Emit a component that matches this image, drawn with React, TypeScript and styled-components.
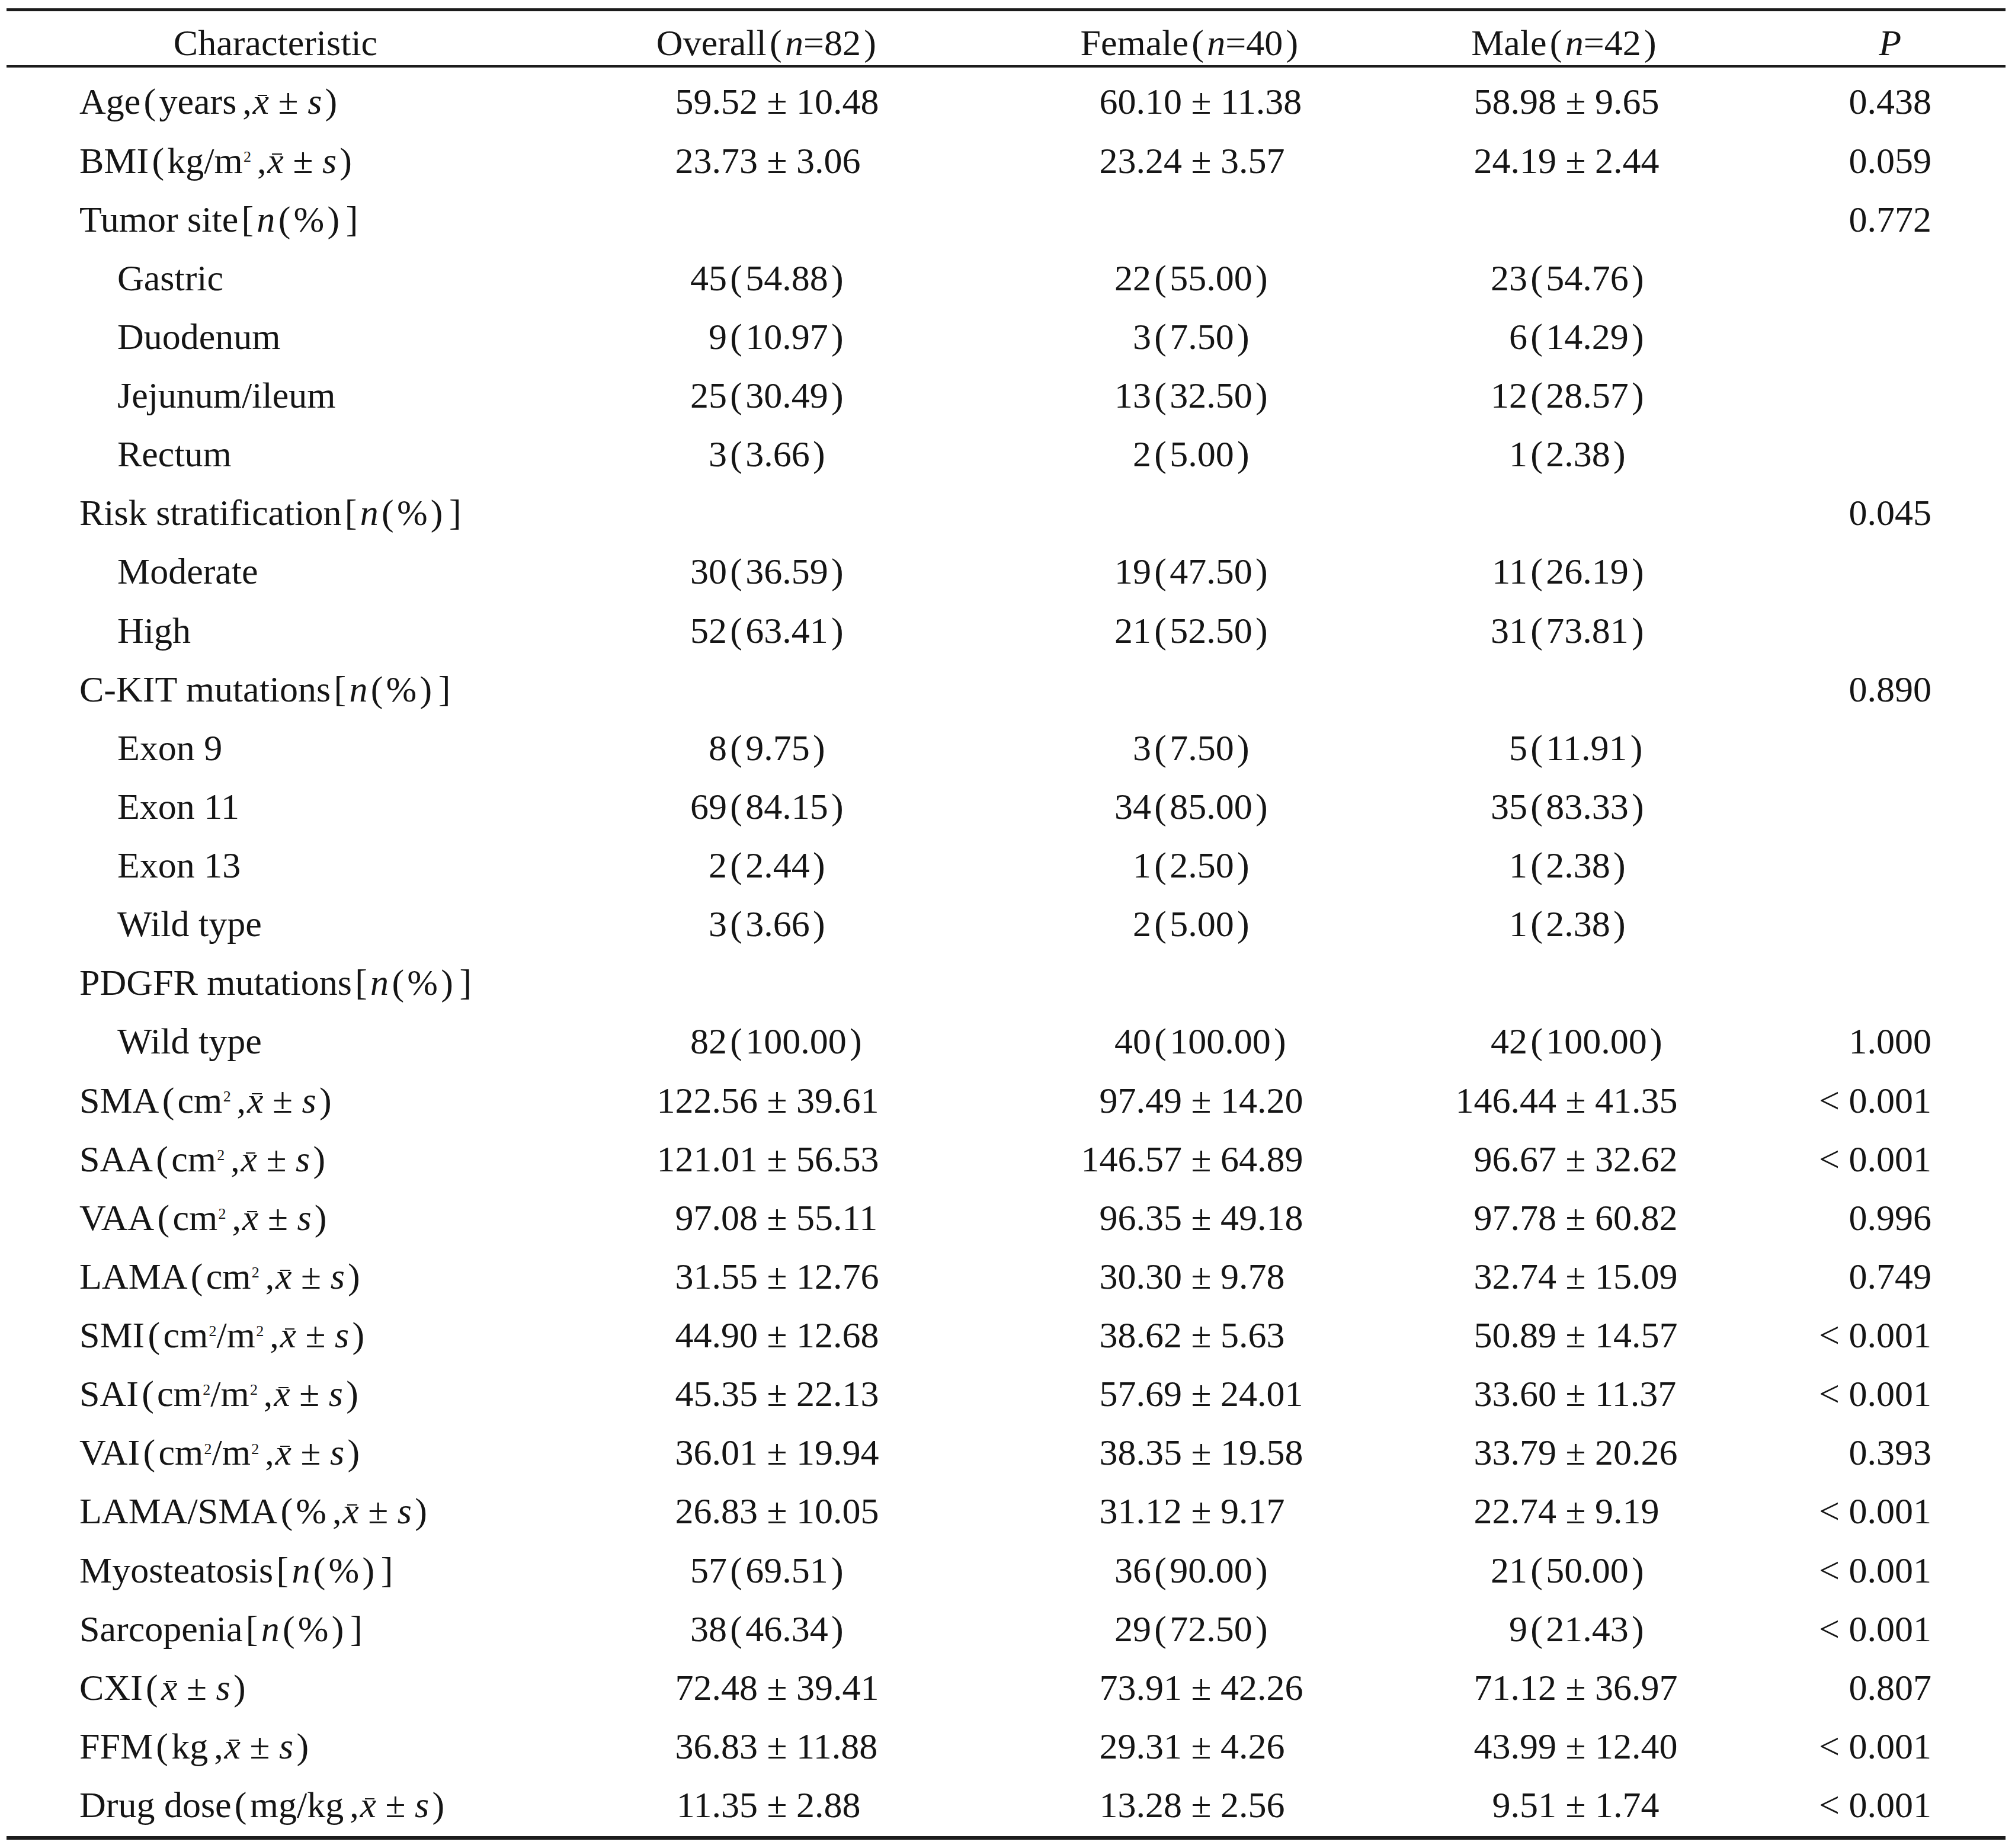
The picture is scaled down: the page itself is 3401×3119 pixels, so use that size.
import React from "react";
import styled, { createGlobalStyle } from "styled-components";

const Global = createGlobalStyle`
  html, body { margin: 0; padding: 0; background: #ffffff; }
  body {
    font-family: "Liberation Serif", "Times New Roman", serif;
    color: #151515;
  }
`;

const COLS = "908px 754px 674px 590px 323px";
const ROW_H = 99.14;

const Page = styled.div`
  width: 3401px;
  min-height: 3119px;
  box-sizing: border-box;
  padding: 14px 16px 0 11px;
  background: #ffffff;
`;

const Table = styled.div`
  width: 3374px;
  font-size: 62px;
  border-top: 5px solid #1c1c1c;
  border-bottom: 6px solid #1c1c1c;
`;

const HeaderRow = styled.div`
  display: grid;
  grid-template-columns: ${COLS};
  height: 95px;
  box-sizing: border-box;
  padding-top: 12px;
  line-height: 83px;
  border-bottom: 4px solid #1c1c1c;
`;

const HeadCell = styled.div`
  text-align: center;
  white-space: nowrap;
`;

const PHeadCell = styled.div`
  display: flex;
  justify-content: flex-end;
`;

const PHead = styled.i`
  width: 2.25em;
  text-align: center;
  font-style: italic;
`;

const Body = styled.div`
  padding: 8.4px 0 2.4px;
`;

const Row = styled.div`
  display: grid;
  grid-template-columns: ${COLS};
  height: ${ROW_H}px;
  line-height: ${ROW_H}px;
  white-space: nowrap;
`;

const LabelCell = styled.div<{ $indent?: boolean }>`
  padding-left: ${(p) => (p.$indent ? 187 : 123)}px;
`;

const ValueCell = styled.div`
  display: flex;
`;

const Head = styled.span<{ $anchor: number }>`
  width: ${(p) => p.$anchor}px;
  flex-shrink: 0;
  text-align: right;
`;

const Tail = styled.span`
  white-space: pre;
`;

const PCell = styled.div`
  text-align: right;
`;

const Punct = styled.span<{ $comma?: boolean }>`
  margin: ${(p) => (p.$comma ? "0 0.03em 0 0.16em" : "0 0.085em")};
`;

const Ital = styled.i`
  font-style: italic;
`;

const Mean = styled.i`
  position: relative;
  font-style: italic;
  &::before {
    content: "";
    position: absolute;
    left: 0.13em;
    width: 0.27em;
    top: 0.37em;
    border-top: 0.045em solid currentColor;
  }
`;

const Sup = styled.span`
  font-size: 0.42em;
  line-height: 1;
  vertical-align: 0.72em;
  margin-left: 0.05em;
`;

function Rich({ text }: { text: string }) {
  const parts = text.split(/(\{x\}|\{s\}|\{n\}|\^2|[()[\],])/).filter(Boolean);
  return (
    <>
      {parts.map((t, i) => {
        if (t === "{x}") return <Mean key={i}>x</Mean>;
        if (t === "{s}") return <Ital key={i}>s</Ital>;
        if (t === "{n}") return <Ital key={i}>n</Ital>;
        if (t === "^2") return <Sup key={i}>2</Sup>;
        if ("()[],".includes(t))
          return (
            <Punct key={i} $comma={t === ","}>
              {t}
            </Punct>
          );
        return <React.Fragment key={i}>{t}</React.Fragment>;
      })}
    </>
  );
}

const ANCHORS = [
  { pm: 360, n: 308 },
  { pm: 322, n: 270 },
  { pm: 280, n: 231 },
];

function Value({ v, col }: { v: string; col: number }) {
  const a = ANCHORS[col];
  if (v.includes("±")) {
    const [m, sd] = v.split("±");
    return (
      <ValueCell>
        <Head $anchor={a.pm}>{m}</Head>
        <Tail>{` ± ${sd}`}</Tail>
      </ValueCell>
    );
  }
  const idx = v.indexOf("(");
  const c = v.slice(0, idx);
  const pct = v.slice(idx + 1, v.length - 1);
  return (
    <ValueCell>
      <Head $anchor={a.n}>{c}</Head>
      <Tail>
        <Punct>(</Punct>
        {pct}
        <Punct>)</Punct>
      </Tail>
    </ValueCell>
  );
}

type RowData = { label: string; indent?: boolean; v?: [string, string, string]; p?: string };

const rows: RowData[] = [
  { label: "Age(years,{x} ± {s})", v: ["59.52±10.48", "60.10±11.38", "58.98±9.65"], p: "0.438" },
  { label: "BMI(kg/m^2,{x} ± {s})", v: ["23.73±3.06", "23.24±3.57", "24.19±2.44"], p: "0.059" },
  { label: "Tumor site[{n}(%)]", p: "0.772" },
  { label: "Gastric", indent: true, v: ["45(54.88)", "22(55.00)", "23(54.76)"] },
  { label: "Duodenum", indent: true, v: ["9(10.97)", "3(7.50)", "6(14.29)"] },
  { label: "Jejunum/ileum", indent: true, v: ["25(30.49)", "13(32.50)", "12(28.57)"] },
  { label: "Rectum", indent: true, v: ["3(3.66)", "2(5.00)", "1(2.38)"] },
  { label: "Risk stratification[{n}(%)]", p: "0.045" },
  { label: "Moderate", indent: true, v: ["30(36.59)", "19(47.50)", "11(26.19)"] },
  { label: "High", indent: true, v: ["52(63.41)", "21(52.50)", "31(73.81)"] },
  { label: "C-KIT mutations[{n}(%)]", p: "0.890" },
  { label: "Exon 9", indent: true, v: ["8(9.75)", "3(7.50)", "5(11.91)"] },
  { label: "Exon 11", indent: true, v: ["69(84.15)", "34(85.00)", "35(83.33)"] },
  { label: "Exon 13", indent: true, v: ["2(2.44)", "1(2.50)", "1(2.38)"] },
  { label: "Wild type", indent: true, v: ["3(3.66)", "2(5.00)", "1(2.38)"] },
  { label: "PDGFR mutations[{n}(%)]" },
  { label: "Wild type", indent: true, v: ["82(100.00)", "40(100.00)", "42(100.00)"], p: "1.000" },
  { label: "SMA(cm^2,{x} ± {s})", v: ["122.56±39.61", "97.49±14.20", "146.44±41.35"], p: "< 0.001" },
  { label: "SAA(cm^2,{x} ± {s})", v: ["121.01±56.53", "146.57±64.89", "96.67±32.62"], p: "< 0.001" },
  { label: "VAA(cm^2,{x} ± {s})", v: ["97.08±55.11", "96.35±49.18", "97.78±60.82"], p: "0.996" },
  { label: "LAMA(cm^2,{x} ± {s})", v: ["31.55±12.76", "30.30±9.78", "32.74±15.09"], p: "0.749" },
  { label: "SMI(cm^2/m^2,{x} ± {s})", v: ["44.90±12.68", "38.62±5.63", "50.89±14.57"], p: "< 0.001" },
  { label: "SAI(cm^2/m^2,{x} ± {s})", v: ["45.35±22.13", "57.69±24.01", "33.60±11.37"], p: "< 0.001" },
  { label: "VAI(cm^2/m^2,{x} ± {s})", v: ["36.01±19.94", "38.35±19.58", "33.79±20.26"], p: "0.393" },
  { label: "LAMA/SMA(%,{x} ± {s})", v: ["26.83±10.05", "31.12±9.17", "22.74±9.19"], p: "< 0.001" },
  { label: "Myosteatosis[{n}(%)]", v: ["57(69.51)", "36(90.00)", "21(50.00)"], p: "< 0.001" },
  { label: "Sarcopenia[{n}(%)]", v: ["38(46.34)", "29(72.50)", "9(21.43)"], p: "< 0.001" },
  { label: "CXI({x} ± {s})", v: ["72.48±39.41", "73.91±42.26", "71.12±36.97"], p: "0.807" },
  { label: "FFM(kg,{x} ± {s})", v: ["36.83±11.88", "29.31±4.26", "43.99±12.40"], p: "< 0.001" },
  { label: "Drug dose(mg/kg,{x} ± {s})", v: ["11.35±2.88", "13.28±2.56", "9.51±1.74"], p: "< 0.001" },
];

export default function App() {
  return (
    <Page>
      <Global />
      <Table>
        <HeaderRow>
          <HeadCell>Characteristic</HeadCell>
          <HeadCell>
            <Rich text="Overall({n}=82)" />
          </HeadCell>
          <HeadCell>
            <Rich text="Female({n}=40)" />
          </HeadCell>
          <HeadCell>
            <Rich text="Male({n}=42)" />
          </HeadCell>
          <PHeadCell>
            <PHead>P</PHead>
          </PHeadCell>
        </HeaderRow>
        <Body>
          {rows.map((r, i) => (
            <Row key={i}>
              <LabelCell $indent={r.indent}>
                <Rich text={r.label} />
              </LabelCell>
              {r.v ? r.v.map((v, c) => <Value key={c} v={v} col={c} />) : [0, 1, 2].map((c) => <div key={c} />)}
              <PCell>{r.p ?? ""}</PCell>
            </Row>
          ))}
        </Body>
      </Table>
    </Page>
  );
}
